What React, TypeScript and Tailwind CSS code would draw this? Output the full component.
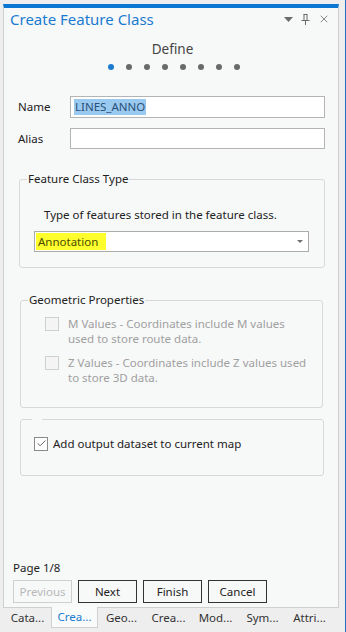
import { Check, X } from 'lucide-react'

// Panel "Create Feature Class" – página Define (1/8)
export default function App() {
  const tabs = ['Cata...', 'Crea...', 'Geo...', 'Crea...', 'Mod...', 'Sym...', 'Attri...']

  return (
    <div
      className="w-[346px] h-[632px] bg-[#eeeeee] flex text-[11.5px] text-[#222] overflow-hidden"
      style={{ fontFamily: '"Noto Sans", "Open Sans", sans-serif' }}
    >
      <div className="flex flex-col w-[345px]">
        {/* Panel */}
        <div className="ml-[3px] mt-[4px] w-[336px] h-[604px] flex flex-col bg-[#f7f8f8] border-x border-b border-[#cfcfcf] border-t-4 border-t-[#0a78d2]">
          {/* Title */}
          <div className="flex items-center h-[22px] pl-[6px] pr-[8px]">
            <span className="text-[15px] text-[#1a7bd0] leading-none">Create Feature Class</span>
            <div className="ml-auto flex items-center gap-[8px] text-[#6b6b6b]">
              <svg width="9" height="5" viewBox="0 0 9 5">
                <path d="M0 0h9L4.5 5z" fill="#6b6b6b" />
              </svg>
              <svg width="9" height="11" viewBox="0 0 9 11" fill="none" stroke="#6b6b6b">
                <path d="M2.5 0.5h4M3 0.5v6M6 0.5v6M0.5 6.5h8M4.5 6.5v4.5" />
              </svg>
              <X size={12} strokeWidth={1.6} />
            </div>
          </div>

          {/* Step */}
          <div className="mt-[9px] text-center text-[13.5px] text-[#444] leading-[20px] pl-[3px]">Define</div>
          <div className="mt-[5px] flex justify-center gap-[12px] pl-[5px]">
            {Array.from({ length: 8 }).map((_, i) => (
              <span key={i} className={`w-[6px] h-[6px] rounded-full ${i === 0 ? 'bg-[#1a7bd0]' : 'bg-[#6a6a6a]'}`} />
            ))}
          </div>

          {/* Name / Alias */}
          <div className="mt-[26px] flex items-center pl-[14px]">
            <span className="w-[52px]">Name</span>
            <div className="w-[255px] h-[22px] bg-white border border-[#b4b4b4] flex items-center px-[3px]">
              <span className="bg-[#99c9ef] text-[#2a4f7a] px-[1px] leading-[16px]">LINES_ANNO</span>
            </div>
          </div>
          <div className="mt-[10px] flex items-center pl-[14px]">
            <span className="w-[52px]">Alias</span>
            <div className="w-[255px] h-[21px] bg-white border border-[#b4b4b4]" />
          </div>

          {/* Feature Class Type */}
          <fieldset className="mt-[22px] ml-[15px] w-[306px] h-[97px] border border-[#d8d8d8] rounded-[3px] px-[14px]">
            <legend className="ml-[-7px] px-[1px] leading-[16px]">Feature Class Type</legend>
            <div className="mt-[19px] pl-[10px]">Type of features stored in the feature class.</div>
            <div className="mt-[8px] w-[275px] h-[21px] bg-white border border-[#ababab] flex items-center pl-[1px] pr-[5px]">
              <span className="bg-[#ffff2e] text-[#4a4a00] pl-[2px] pr-[8px] leading-[17px]">Annotation</span>
              <svg className="ml-auto" width="6" height="3" viewBox="0 0 6 3">
                <path d="M0 0h6L3 3z" fill="#707070" />
              </svg>
            </div>
          </fieldset>

          {/* Geometric Properties */}
          <fieldset className="mt-[24px] ml-[16px] w-[303px] h-[116px] border border-[#d8d8d8] rounded-[3px] pl-[24px] pr-[10px] text-[#a0a0a0]">
            <legend className="ml-[-17px] px-[1px] text-[#222] leading-[16px]">Geometric Properties</legend>
            <div className="mt-[8px] flex items-start gap-[9px]">
              <span className="mt-[1px] w-[14px] h-[14px] shrink-0 border border-[#d0d0d0] bg-[#f4f4f4]" />
              <span className="leading-[15px]">M Values - Coordinates include M values used to store route data.</span>
            </div>
            <div className="mt-[9px] flex items-start gap-[9px]">
              <span className="mt-[1px] w-[14px] h-[14px] shrink-0 border border-[#d0d0d0] bg-[#f4f4f4]" />
              <span className="leading-[15px]">Z Values - Coordinates include Z values used to store 3D data.</span>
            </div>
          </fieldset>

          {/* Add to map */}
          <fieldset className="mt-[10px] ml-[16px] w-[304px] h-[58px] border border-[#d8d8d8] rounded-[3px] pl-[13px]">
            <legend className="ml-[-2px] w-[10px] h-[2px]" />
            <div className="mt-[15px] flex items-center gap-[5px]">
              <span className="w-[14px] h-[14px] border border-[#8a8a8a] bg-white flex items-center justify-center">
                <Check size={11} strokeWidth={2} color="#555" />
              </span>
              <span>Add output dataset to current map</span>
            </div>
          </fieldset>

          {/* Footer */}
          <div className="mt-auto pl-[9px] pb-[4px]">
            <div className="leading-[16px]">Page 1/8</div>
            <div className="mt-[4px] flex gap-[6px]">
              <button className="w-[59px] h-[23px] border border-[#cfcfcf] text-[#b8b8b8]">Previous</button>
              <button className="w-[59px] h-[23px] border border-[#333] bg-[#f7f8f8]">Next</button>
              <button className="w-[59px] h-[23px] border border-[#333] bg-[#f7f8f8]">Finish</button>
              <button className="w-[59px] h-[23px] border border-[#333] bg-[#f7f8f8]">Cancel</button>
            </div>
          </div>
        </div>

        {/* Tabs */}
        <div className="flex pl-[4px] h-[20px]">
          {tabs.map((t, i) => (
            <div
              key={i}
              className={`h-[20px] w-[47px] flex items-center justify-center ${
                i === 1 ? 'bg-[#f9fafa] border-x border-b border-[#cfcfcf] text-[#1a7bd0] mt-[-1px] h-[21px]' : 'text-[#333]'
              }`}
            >
              {t}
            </div>
          ))}
        </div>
      </div>
      <div className="w-[1px] h-full bg-[#1b6fbe]" />
    </div>
  )
}
